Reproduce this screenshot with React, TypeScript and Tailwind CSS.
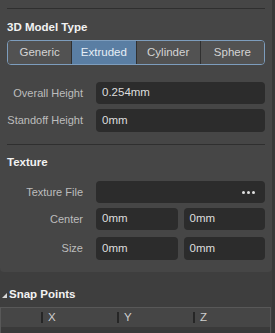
const font = { fontFamily: '"Liberation Sans", Arial, sans-serif' };

const modelTypes = ["Generic", "Extruded", "Cylinder", "Sphere"];

function Field({ value, className = "" }: { value?: string; className?: string }) {
  return (
    <div className={`flex items-center rounded-[4px] bg-[#2c2c2c] pl-[6px] text-[11.5px] text-[#dedede] ${className}`}>
      {value}
    </div>
  );
}

function Row({ label, children, className = "" }: { label: string; children: React.ReactNode; className?: string }) {
  return (
    <div className={`flex items-stretch ${className}`}>
      <div className="flex w-[76px] shrink-0 items-center justify-end whitespace-nowrap text-[11px] text-[#bdbdbd]">{label}</div>
      <div className="ml-[13px] flex flex-1 gap-[6px]">{children}</div>
    </div>
  );
}

export default function App() {
  return (
    <div className="flex h-[333px] w-[275px] overflow-hidden bg-[#3e3e3e]" style={font}>
      <div className="flex w-[272px] flex-col">
        <div className="rounded-b-[4px] bg-[#464646] px-[7px] pb-[12px] pt-[8px]">
          <div className="h-px bg-[#2f2f2f]" />
          <div className="mt-[11px] text-[11.5px] font-bold leading-[14px] text-[#f2f2f2]">3D Model Type</div>
          <div className="mt-[6px] flex h-[25px] overflow-hidden rounded-[4px] border border-[#7d9dbd]">
            {modelTypes.map((t, i) => (
              <div
                key={t}
                className={`flex flex-1 items-center justify-center text-[11.5px] ${
                  i > 0 ? "border-l border-[#303030]" : ""
                } ${t === "Extruded" ? "bg-[#5a7ea3] text-[#e6eef6]" : "bg-[#525252] text-[#d4d4d4]"}`}
              >
                {t}
              </div>
            ))}
          </div>
          <Row label="Overall Height" className="mt-[17px] h-[22px]">
            <Field value="0.254mm" className="flex-1" />
          </Row>
          <Row label="Standoff Height" className="mt-[5px] h-[23px]">
            <Field value="0mm" className="flex-1" />
          </Row>
          <div className="mt-[12px] h-px bg-[#2f2f2f]" />
          <div className="mt-[10px] text-[11.5px] font-bold leading-[14px] text-[#f2f2f2]">Texture</div>
          <Row label="Texture File" className="mt-[12px] h-[22px]">
            <div className="flex flex-1 items-center justify-end rounded-[4px] bg-[#2c2c2c] pr-[10px]">
              <div className="flex gap-[2px]">
                <span className="h-[3px] w-[3px] rounded-full bg-[#e0e0e0]" />
                <span className="h-[3px] w-[3px] rounded-full bg-[#e0e0e0]" />
                <span className="h-[3px] w-[3px] rounded-full bg-[#e0e0e0]" />
              </div>
            </div>
          </Row>
          <Row label="Center" className="mt-[5px] h-[22px]">
            <Field value="0mm" className="flex-1" />
            <Field value="0mm" className="flex-1" />
          </Row>
          <Row label="Size" className="mt-[7px] h-[23px]">
            <Field value="0mm" className="flex-1" />
            <Field value="0mm" className="flex-1" />
          </Row>
        </div>
        <div className="mt-[16px] flex h-[14px] items-center pl-[2px]">
          <svg width="5" height="5" viewBox="0 0 5 5" className="mt-[1px]">
            <polygon points="5,0 5,5 0,5" fill="#d8d8d8" />
          </svg>
          <span className="ml-[2px] text-[11.5px] font-bold text-[#f2f2f2]">Snap Points</span>
        </div>
        <div className="mt-[5px] flex h-[20px] w-[271px] border-x border-t border-[#585858] bg-[#464646] text-[11.5px] text-[#cfcfcf]">
          <div className="w-[40px]" />
          {["X", "Y", "Z"].map((c, i) => (
            <div key={c} className={`flex items-center ${i === 2 ? "flex-1" : "w-[76px]"}`}>
              <span className="h-[11px] w-[2px] bg-[#262626]" />
              <span className="ml-[5px]">{c}</span>
            </div>
          ))}
        </div>
        <div className="w-[271px] flex-1 border-x border-[#585858] bg-[#3a3a3a]" />
      </div>
      <div className="w-[3px] bg-[#383838]" />
    </div>
  );
}
